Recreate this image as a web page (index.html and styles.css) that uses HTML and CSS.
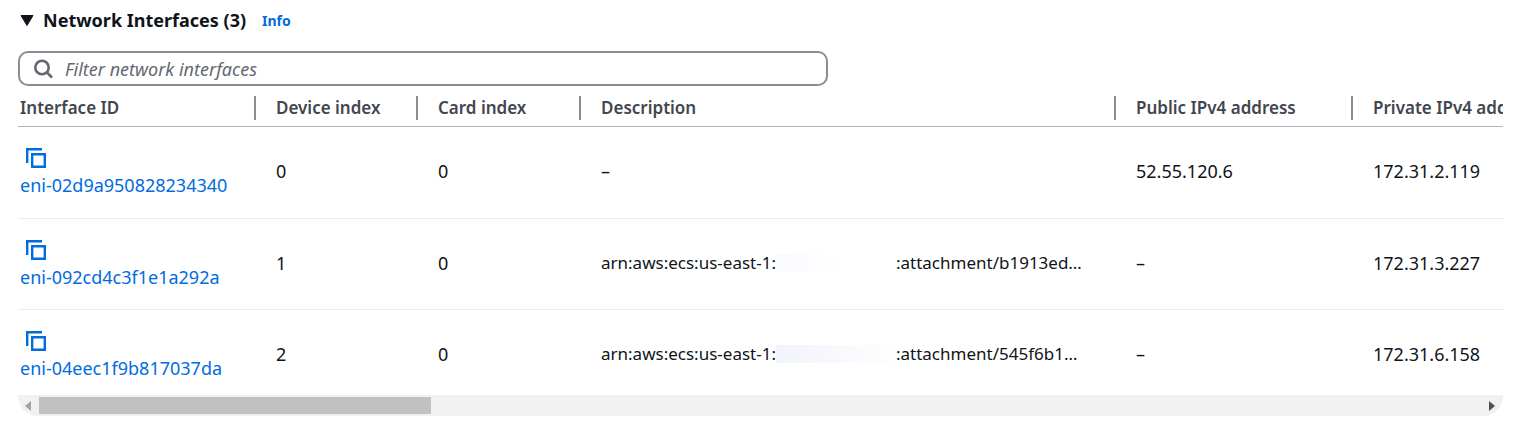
FILE: index.html
```html
<!DOCTYPE html>
<html lang="en">
<head>
<meta charset="utf-8">
<title>Network Interfaces</title>
<link rel="stylesheet" href="styles.css">
</head>
<body>
<svg class="sprite" aria-hidden="true">
  <symbol id="copy" viewBox="0 0 20 20">
    <path d="M16 1.2H1.2V15M6.2 6.2h12.6v12.6H6.2z" fill="none" stroke="currentColor" stroke-width="2.4"/>
  </symbol>
</svg>
<main class="panel">
  <header class="heading">
    <button class="toggle" type="button" aria-label="Collapse section" aria-expanded="true">
      <svg width="14" height="11" viewBox="0 0 14 11"><path d="M1 .5h12L7 10.5z" fill="currentColor" stroke="currentColor" stroke-linejoin="round"/></svg>
    </button>
    <h2 class="title">Network Interfaces (3)</h2>
    <a class="info" href="#info">Info</a>
  </header>

  <label class="search">
    <svg class="search-icon" width="20" height="20" viewBox="0 0 20 20"><circle cx="8" cy="8.5" r="6.7"/><path d="M12.8 13.3l5.2 5.2"/></svg>
    <input class="search-input" type="text" aria-label="Filter network interfaces" placeholder="Filter network interfaces">
  </label>

  <div class="table-wrap">
    <table class="table">
      <colgroup>
        <col class="col-id"><col class="col-device"><col class="col-card"><col class="col-description"><col class="col-address"><col class="col-address">
      </colgroup>
      <thead>
        <tr>
          <th scope="col"><span class="label">Interface ID</span></th>
          <th scope="col"><span class="label">Device index</span></th>
          <th scope="col"><span class="label">Card index</span></th>
          <th scope="col"><span class="label">Description</span></th>
          <th scope="col"><span class="label">Public IPv4 address</span></th>
          <th scope="col"><span class="label">Private IPv4 address</span></th>
        </tr>
      </thead>
      <tbody>
        <tr>
          <td><button class="copy" type="button" aria-label="Copy interface ID"><svg width="20" height="20"><use href="#copy"/></svg></button><a class="link" href="#eni-02d9a950828234340">eni-02d9a950828234340</a></td>
          <td>0</td>
          <td>0</td>
          <td>–</td>
          <td>52.55.120.6</td>
          <td>172.31.2.119</td>
        </tr>
        <tr>
          <td><button class="copy" type="button" aria-label="Copy interface ID"><svg width="20" height="20"><use href="#copy"/></svg></button><a class="link" href="#eni-092cd4c3f1e1a292a">eni-092cd4c3f1e1a292a</a></td>
          <td>1</td>
          <td>0</td>
          <td><span class="arn"><span>arn:aws:ecs:us-east-1:</span><span class="redacted"></span><span>:attachment/b1913ed…</span></span></td>
          <td>–</td>
          <td>172.31.3.227</td>
        </tr>
        <tr>
          <td><button class="copy" type="button" aria-label="Copy interface ID"><svg width="20" height="20"><use href="#copy"/></svg></button><a class="link" href="#eni-04eec1f9b817037da">eni-04eec1f9b817037da</a></td>
          <td>2</td>
          <td>0</td>
          <td><span class="arn"><span>arn:aws:ecs:us-east-1:</span><span class="redacted redacted-tinted"></span><span>:attachment/545f6b1…</span></span></td>
          <td>–</td>
          <td>172.31.6.158</td>
        </tr>
      </tbody>
    </table>
  </div>
  <div class="scrollbar" aria-hidden="true">
    <svg class="arrow arrow-off" width="6" height="10" viewBox="0 0 6 10"><path d="M6 0v10L0 5z"/></svg>
    <div class="track"><div class="thumb"></div></div>
    <svg class="arrow" width="6" height="10" viewBox="0 0 6 10"><path d="M0 0v10l6-5z"/></svg>
  </div>
</main>
</body>
</html>
```
FILE: styles.css
```css
* { box-sizing: border-box; }

body {
  margin: 0;
  background: #fff;
  color: #0f141a;
  font: 18px/24px "Noto Sans", "Open Sans", sans-serif;
}

button {
  padding: 0;
  border: 0;
  background: none;
  color: inherit;
}

a { color: #006ce0; text-decoration: none; }

.sprite { position: absolute; width: 0; height: 0; }

.panel { padding: 7px 15px 16px 18px; }

.heading {
  display: flex;
  align-items: center;
  height: 26px;
  padding-left: 2px;
}

.toggle { display: flex; margin-right: 9px; }

.title { margin: 0; font-size: 18px; font-weight: 700; }

.info { margin-left: 16px; padding-top: 2px; font-size: 14px; font-weight: 700; }

.search {
  display: flex;
  align-items: center;
  gap: 11px;
  max-width: 810px;
  height: 35px;
  margin-top: 18px;
  padding: 0 14px;
  border: 2px solid #8c8c94;
  border-radius: 10px;
}

.search-icon { flex: none; fill: none; stroke: #656871; stroke-width: 2.6; }

.search-input {
  flex: 1;
  min-width: 0;
  padding: 0;
  border: 0;
  outline: 0;
  background: none;
  color: inherit;
  font: inherit;
}

.search-input::placeholder { color: #656871; font-style: italic; opacity: 1; }

.table-wrap { overflow: hidden; height: 309px; }

.table {
  width: 1572px;
  border-collapse: separate;
  border-spacing: 0;
  table-layout: fixed;
}

.col-id { width: 238px; }
.col-device { width: 162px; }
.col-card { width: 163px; }
.col-description { width: 535px; }
.col-address { width: 237px; }

th {
  height: 41px;
  padding: 0;
  border-bottom: 1px solid #b4b4bb;
  color: #424650;
  font-size: 17px;
  font-weight: 600;
  text-align: left;
  white-space: nowrap;
}

.label {
  display: block;
  margin-top: 4px;
  padding-left: 20px;
  border-right: 2px solid #8c8c94;
}

td {
  height: 91px;
  padding: 0 0 3px 20px;
  white-space: nowrap;
}

tr + tr td { border-top: 1px solid #ebebf0; }

th:first-child .label, td:first-child { padding-left: 2px; }

.copy { display: flex; margin: 3px 0 5px 6px; color: #006ce0; }

.link { display: block; }

.arn { display: flex; align-items: center; font-size: 17px; }

.redacted { width: 120px; height: 18px; background: linear-gradient(90deg, #fafbff, #fff 60%); }

.redacted-tinted { background: linear-gradient(90deg, #f1f4fb, #f8f9fd 50%, #fefefe); }

.scrollbar {
  display: flex;
  align-items: center;
  gap: 8px;
  height: 21px;
  padding: 0 8px 0 7px;
  border-radius: 0 0 20px 20px;
  background: #f1f1f1;
}

.arrow { flex: none; fill: #505050; }
.arrow-off { fill: #a3a3a3; }

.track { flex: 1; }
.thumb { width: 27.2%; height: 17px; background: #c1c1c1; }
```
